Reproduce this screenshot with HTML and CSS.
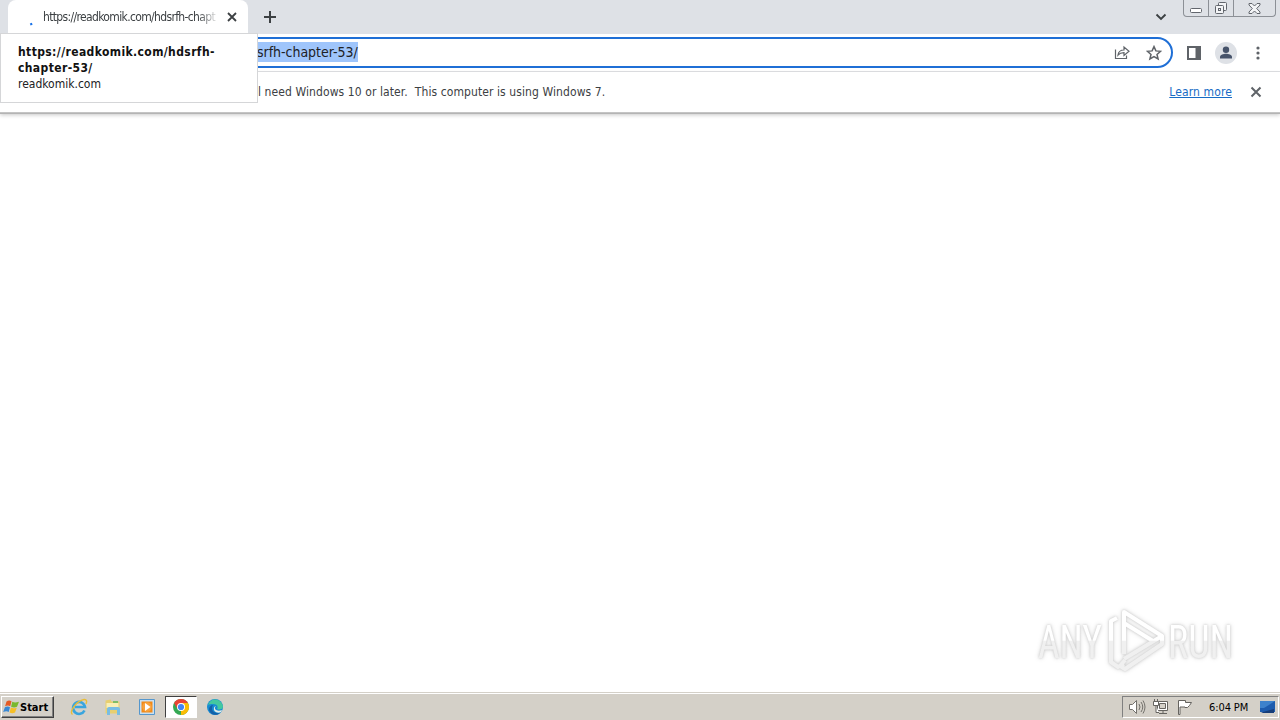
FILE: index.html
```html
<!DOCTYPE html>
<html lang="en">

<head>
    <meta charset="UTF-8">
    <title>https://readkomik.com/hdsrfh-chapter-53/</title>
    <link rel="stylesheet" href="styles.css">
</head>

<body>
    <div class="browser">
        <div class="tab-strip">
            <div class="tab">
                <svg class="spinner" width="16" height="16" viewBox="0 0 16 16"><path d="M8.200 14.500l2-.8" stroke="#1a73e8" stroke-width="2" fill="none"/></svg>
                <span class="tab-title">https://readkomik.com/hdsrfh-chapt</span>
                <svg class="tab-close" width="10" height="10" viewBox="0 0 10 10"><path d="M1 1l8 8M9 1L1 9" stroke="#3c4043" stroke-width="1.8"/></svg>
            </div>
            <svg class="new-tab" width="12" height="12" viewBox="0 0 12 12"><path d="M6 0v12M0 6h12" stroke="#3c4043" stroke-width="2"/></svg>
            <svg class="tab-search" width="12" height="8" viewBox="0 0 12 8"><path d="M1.5 1.5L6 6l4.500-4.500" stroke="#3c4043" stroke-width="1.900" fill="none"/></svg>
            <div class="window-buttons">
                <span class="win-btn minimize"><svg width="12" height="5" viewBox="0 0 12 5"><rect x=".5" y=".5" width="11" height="4" rx="1" fill="#fff" stroke="#62666d"/></svg></span>
                <span class="win-btn restore"><svg width="14" height="13" viewBox="0 0 14 13" fill="#f3f4f6" stroke="#62666d"><rect x="4.500" y=".5" width="8" height="8" rx="1"/><rect x="1.500" y="3.500" width="8" height="8" rx="1"/><rect x="4.500" y="6.500" width="2" height="2"/></svg></span>
                <span class="win-btn close"><svg width="13" height="11" viewBox="0 0 13 11"><path d="M1 .5h3l2.500 2.500L9 .5h3v1.500L8.700 5.500 12 9v1.500H9L6.500 8 4 10.500H1V9l3.300-3.500L1 2z" fill="#f3f4f6" stroke="#62666d"/></svg></span>
            </div>
        </div>

        <div class="toolbar">
            <div class="omnibox">
                <span class="url">srfh-chapter-53/</span>
                <svg class="share" width="16" height="15" viewBox="0 0 16 15" fill="none" stroke="#5f6368" stroke-width="1.200"><path d="M1.500 4.500v9h11v-3"/><path d="M4 10c.5-3.600 2.500-5 6-5V2l5 4.300-5 4.200V7.700C7.500 7.700 5.500 8.300 4 10z"/></svg>
                <svg class="star" width="16" height="16" viewBox="0 0 16 16"><path d="M8 1.600l1.900 4.300 4.700.4-3.600 3.100 1.100 4.600L8 11.600 3.900 14 5 9.400 1.400 6.300l4.700-.4z" fill="none" stroke="#5f6368" stroke-width="1.500"/></svg>
            </div>
            <svg class="side-panel" width="14" height="14" viewBox="0 0 14 14"><path d="M1 1h12v12H1z" fill="none" stroke="#5f6368" stroke-width="2"/><path d="M8.500 1H13v12H8.500z" fill="#5f6368"/></svg>
            <svg class="avatar" width="22" height="22" viewBox="0 0 22 22"><circle cx="11" cy="11" r="11" fill="#dee1e6"/><circle cx="11" cy="7.700" r="3.200" fill="#46536a"/><path d="M5 16.500v-1.500c0-2.200 3.500-3.300 6-3.300s6 1.100 6 3.300v1.500z" fill="#46536a"/></svg>
            <svg class="menu" width="4" height="14" viewBox="0 0 4 14" fill="#5f6368"><circle cx="2" cy="2" r="1.600"/><circle cx="2" cy="7" r="1.600"/><circle cx="2" cy="12" r="1.600"/></svg>
        </div>

        <div class="infobar">
            <span class="infobar-text">l need Windows 10 or later.&nbsp; This computer is using Windows 7.</span>
            <a class="learn-more" href="#">Learn more</a>
            <svg class="infobar-close" width="12" height="12" viewBox="0 0 12 12"><path d="M1.500 1.500l9 9M10.500 1.500l-9 9" stroke="#5f6368" stroke-width="2"/></svg>
        </div>

        <div class="hover-card">
            <div class="hover-title">https://readkomik.com/hdsrfh-</div>
            <div class="hover-title">chapter-53/</div>
            <div class="hover-domain">readkomik.com</div>
        </div>
    </div>

    <div class="page">
        <svg class="watermark" width="214" height="70" viewBox="0 0 214 70">
            <defs>
                <linearGradient id="fade" x1="0" y1="0" x2="0" y2="70" gradientUnits="userSpaceOnUse">
                    <stop offset=".49" stop-color="#fff"/>
                    <stop offset=".5" stop-color="#f0f0f0"/>
                </linearGradient>
            </defs>
            <g fill="url(#fade)" class="wm-text">
                <text x="5" y="52" textLength="64" lengthAdjust="spacingAndGlyphs">ANY</text>
                <text x="135" y="52" textLength="65" lengthAdjust="spacingAndGlyphs">RUN</text>
            </g>
            <g fill="none" stroke="url(#fade)" stroke-width="4" stroke-linejoin="round">
                <path d="M84 12l-6 3v41l7 5 6-3"/>
                <path d="M91 48V6l38 24-38 23"/>
                <path d="M91 17l29 18M129 30v8L92 63l-5-3 5-6"/>
            </g>
        </svg>
    </div>

    <div class="taskbar">
        <div class="start">
            <svg width="17" height="16" viewBox="0 0 17 16"><path d="M3.500 2.500C5.500 1 7 1.300 8.500 2.200L7.200 7.200C5.500 6.200 4 6.300 2.100 7.300z" fill="#e45b25"/><path d="M9.300 2.700c2 1 3.500 1 6.700 0l-2 5c-2 1-3.800 1-5.900 0z" fill="#79b82e"/><path d="M1.900 8.200c2-1 3.400-1 5.100 0L5.700 13C4 12 2.500 12.200.2 13z" fill="#3888d4"/><path d="M7.900 8.600c2 1 3.400 1 5.900.1L12 13.600c-2 1-3.500 1-5.400 0z" fill="#f6bf26"/></svg>
            <span>Start</span>
        </div>
        <div class="launchers">
            <span class="launcher"><svg width="18" height="18" viewBox="0 0 18 18" fill="none"><path d="M14.500 12.500A6 6 0 1 1 15 9H5" stroke="#39a5de" stroke-width="2.600"/><path d="M2.500 16.500C-1 14 6 3 14 1.500c3-.3 3 2 2 4.500" stroke="#e9bd38" stroke-width="1.400"/></svg></span>
            <span class="launcher"><svg width="18" height="18" viewBox="0 0 18 18"><path d="M1.500 2.500l5-1 1 2h8v12h-14z" fill="#e8cf70"/><path d="M2.500 5h12v5h-12z" fill="#f9efb5"/><path d="M9 3h5v2H9z" fill="#7fbd68"/><path d="M3 17v-6q0-2 2-2h9q2 0 2 2v6h-3v-5H6v5z" fill="#79bde3"/></svg></span>
            <span class="launcher"><svg width="18" height="18" viewBox="0 0 18 18"><path d="M1.500 1.500h15v15h-15z" fill="#c9e0f1" stroke="#5597cd"/><path d="M3.500 3.500h11v11h-11z" fill="#f28a18"/><circle cx="9" cy="9" r="4.800" fill="#f7a23d"/><path d="M7 5v8l5.500-4z" fill="#fff"/></svg></span>
            <span class="launcher active"><svg width="18" height="18" viewBox="0 0 18 18"><circle cx="9" cy="9" r="8" fill="#34a853"/><path d="M9 9l6.930-4A8 8 0 0 1 9 17z" fill="#fbbc04"/><path d="M9 5h6.930L12.500 11z" fill="#fbbc04"/><path d="M9 5h6.930A8 8 0 0 0 2.070 5l3.430 6z" fill="#ea4335"/><circle cx="9" cy="9" r="4" fill="#fff"/><circle cx="9" cy="9" r="3.100" fill="#4285f4"/></svg></span>
            <span class="launcher"><svg width="18" height="18" viewBox="0 0 18 18"><circle cx="9" cy="9" r="8" fill="#168bd2"/><path d="M2 7C4 0 14-1 17 8c0 4-4 4-6 3 2-3-1-5-4-5-2 0-4 0-5 1z" fill="#43c8a0"/><path d="M7 7c-3 5 1 9 7 8-4 4-11 1-11-4 0-2 2-4 4-4z" fill="#1260a8"/><path d="M10 8c-3 3 1 6 6 4l-1 2c-4 2-8-1-7-4 0-1 1-2 2-2z" fill="#e5ece7"/></svg></span>
        </div>
        <div class="tray">
            <svg width="18" height="16" viewBox="0 0 18 16" fill="none" stroke="#73716c"><path d="M1.500 5.500h3l4-4v13l-4-4h-3z" fill="#fff"/><path d="M11 5q2 3 0 6M13 3q3.500 5 0 10M15 1.500q4 6.500 0 13"/></svg>
            <svg width="18" height="16" viewBox="0 0 18 16" fill="#fff" stroke="#65635f"><path d="M5.500 2.500h10v9h-10zM7 14.500h8M11 12v2"/><path d="M7.500 4.500h6v5h-6z" fill="#d4d0c8"/><path d="M1.500 2.500h5v4h-5zM2.500 0v2M5.500 0v2M4 6.500v7h3"/></svg>
            <svg width="18" height="16" viewBox="0 0 18 16" fill="#fff" stroke="#65635f"><path d="M2.500 15.500v-14h7v2h6l-2 3-2 2H9V8H4v7.500z"/></svg>
            <span class="clock">6:04 PM</span>
            <svg class="desktop" width="17" height="15" viewBox="0 0 17 15"><path d="M1 1h15v11H1z" fill="#1d5cae"/><path d="M1 1h15L5 8H1z" fill="#3d82cc"/><path d="M4 12l11-3v4H2z" fill="#173d78"/></svg>
        </div>
    </div>
</body>

</html>
```
FILE: styles.css
```css
body {
    margin: 0;
    width: 1280px;
    height: 720px;
    display: flex;
    flex-direction: column;
    overflow: hidden;
    background: #fff;
    font-family: "DejaVu Sans Condensed", "DejaVu Sans", sans-serif;
    font-stretch: condensed;
    color: #202124;
}

svg {
    display: block;
    flex: none;
}

span,
a {
    white-space: nowrap;
}

.browser {
    position: relative;
}

.tab-strip {
    height: 34px;
    display: flex;
    align-items: center;
    background: #dee1e6;
}

.tab {
    width: 240px;
    height: 34px;
    margin-left: 8px;
    padding: 0 11px 0 14px;
    box-sizing: border-box;
    display: flex;
    align-items: center;
    background: #fff;
    border-radius: 8px 8px 0 0;
}

.spinner {
    margin-top: 2px;
}

.tab-title {
    width: 177px;
    margin-left: 5px;
    margin-right: 8px;
    font-size: 12px;
    letter-spacing: -0.65px;
    color: #3c4043;
    -webkit-mask-image: linear-gradient(90deg, #000 88%, transparent);
    mask-image: linear-gradient(90deg, #000 88%, transparent);
}

.new-tab {
    margin-left: 16px;
}

.tab-search {
    margin-left: auto;
    margin-right: 16px;
}

.window-buttons {
    width: 93px;
    height: 17px;
    margin-right: 4px;
    box-sizing: border-box;
    align-self: flex-start;
    display: flex;
    border: 1px solid #8c9096;
    border-top: 0;
    border-radius: 0 0 4px 4px;
}

.win-btn {
    width: 24px;
    display: flex;
    align-items: center;
    justify-content: center;
    border-right: 1px solid #8c9096;
}

.minimize svg {
    margin-top: 4px;
}

.win-btn.close {
    flex: 1;
    border: 0;
}

.toolbar {
    height: 37px;
    display: flex;
    align-items: center;
    border-bottom: 1px solid #dcdee1;
}

.omnibox {
    width: 1133px;
    height: 31px;
    margin-left: 40px;
    padding: 0 10px 0 215px;
    box-sizing: border-box;
    display: flex;
    align-items: center;
    border: 2px solid #1f6fd6;
    border-radius: 16px;
}

.url {
    height: 20px;
    line-height: 20px;
    margin-top: -1px;
    background: #9fc5fb;
    font-size: 14px;
    letter-spacing: -0.03px;
}

.share {
    margin-left: auto;
    margin-right: 16px;
}

.star {
    margin-right: -1px;
}

.side-panel {
    margin-left: 14px;
}

.avatar {
    margin-left: 14px;
}

.menu {
    margin-left: 19px;
}

.infobar {
    height: 40px;
    padding: 0 18px 0 258px;
    display: flex;
    align-items: center;
    border-bottom: 1px solid #c4c4c4;
    box-shadow: 0 1px 0 #b4b4b4, 0 2px 4px #c8c8c8;
    font-size: 12px;
}

.infobar-text {
    color: #3c4043;
    letter-spacing: 0.09px;
}

.learn-more {
    margin-left: auto;
    color: #176bc5;
    letter-spacing: 0.12px;
}

.infobar-close {
    margin-left: 18px;
}

.hover-card {
    position: absolute;
    left: 0;
    top: 33px;
    width: 258px;
    height: 70px;
    padding: 10px 17px;
    box-sizing: border-box;
    background: #fff;
    border: 1px solid #d5d6d8;
    font-size: 12px;
    line-height: 16px;
    white-space: nowrap;
}

.hover-title {
    font-weight: bold;
    letter-spacing: 0.39px;
    color: #111;
}

.page {
    flex: 1;
    position: relative;
}

.watermark {
    position: absolute;
    right: 33px;
    bottom: 17px;
    filter: drop-shadow(0 0 1px #ccc) drop-shadow(0 0 2px #ddd);
}

.wm-text {
    font-family: Roboto, sans-serif;
    font-size: 47px;
}

.taskbar {
    height: 26px;
    display: flex;
    align-items: center;
    background: #d4d0c8;
    border-top: 1px solid #fff;
    box-shadow: 0 -1px 0 #d4d0c8;
    font-size: 11px;
    color: #000;
}

.start {
    width: 53px;
    height: 22px;
    margin-left: 1px;
    padding-left: 1px;
    box-sizing: border-box;
    display: flex;
    align-items: center;
    border: 1px solid;
    border-color: #fff #404040 #404040 #fff;
    box-shadow: inset -1px -1px 0 #808080;
    font-weight: bold;
}

.launchers {
    margin-left: 9px;
    display: flex;
    gap: 2px;
}

.launcher {
    width: 32px;
    height: 22px;
    box-sizing: border-box;
    display: flex;
    align-items: center;
    justify-content: center;
}

.launcher.active {
    background: #fff;
    border: 1px solid;
    border-color: #404040 #fff #fff #404040;
}

.tray {
    width: 157px;
    height: 22px;
    margin-left: auto;
    margin-right: 1px;
    padding: 0 2px 0 5px;
    box-sizing: border-box;
    display: flex;
    align-items: center;
    gap: 6px;
    border: 1px solid;
    border-color: #808080 #fff #fff #808080;
}

.clock {
    margin-left: 9px;
    letter-spacing: -0.1px;
}

.desktop {
    margin-left: auto;
}
```
